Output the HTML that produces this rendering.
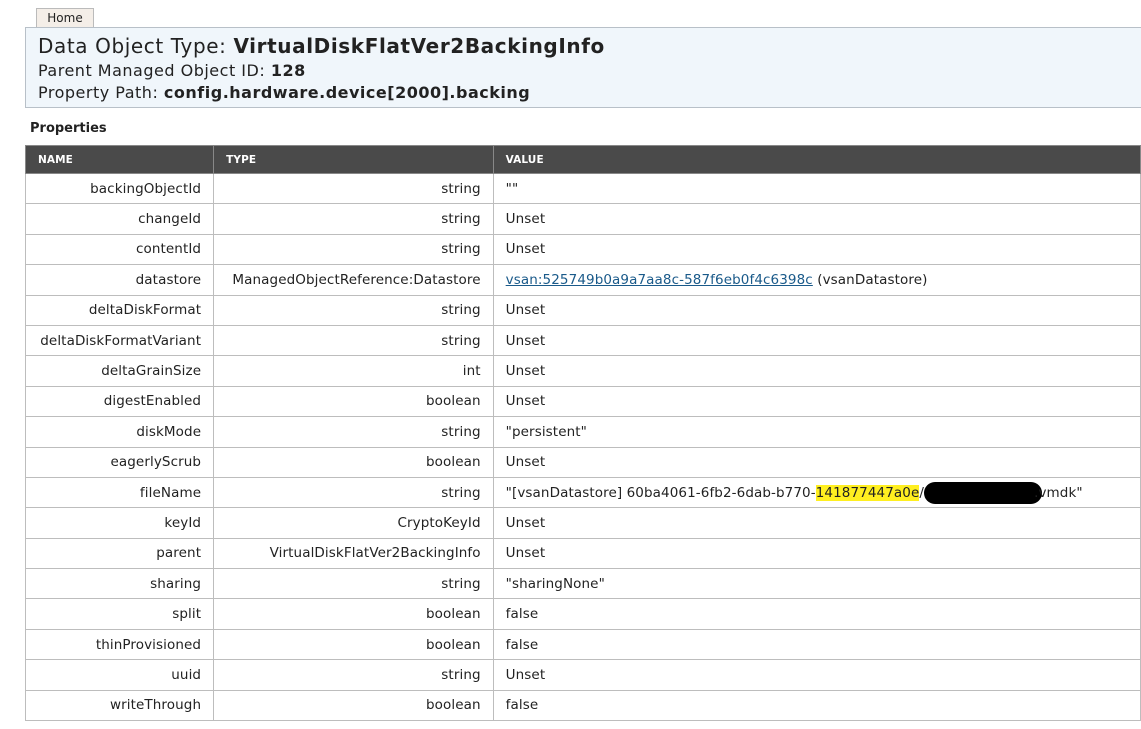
<!DOCTYPE html>
<html><head><meta charset="utf-8"><style>
body{margin:0;background:#fff;font-family:"DejaVu Sans","Liberation Sans",sans-serif;color:#222;width:1141px;height:729px;overflow:hidden;position:relative}
.tab{position:absolute;left:36px;top:8px;width:58px;height:19px;border:1px solid #bbb;border-bottom:none;background:#f4eee8;font-size:12px;line-height:19px;text-align:center;box-sizing:border-box}
.hdr{position:absolute;left:25px;top:27px;width:1130px;height:81px;background:#f0f6fb;border:1px solid #b8c0c8;box-sizing:border-box}
.t1{position:absolute;left:12px;top:6px;font-size:20px;white-space:nowrap;letter-spacing:0.6px}
.t2{position:absolute;left:12px;font-size:16px;white-space:nowrap;letter-spacing:0.5px}
.props{position:absolute;left:30px;top:121px;font-size:13px;font-weight:bold;letter-spacing:0}
table{position:absolute;left:25px;top:145px;border-collapse:collapse;font-size:13.5px;letter-spacing:0.1px}
th{background:#4a4a4a;color:#fff;font-size:10.5px;text-align:left;height:27px;padding:0 12px;border:1px solid #888;font-weight:bold}
td{height:29.4px;border:1px solid #bdbdbd;padding:0 12px;white-space:nowrap}
td.n,td.t{text-align:right}
a{color:#1a5a8a}
.hl{background:#ffef20}
.blk{display:inline-block;width:118px;height:22px;background:#000;border-radius:11px;vertical-align:middle;margin:0 -8px 0 0}
</style></head><body>
<div class="tab">Home</div>
<div class="hdr">
<div class="t1">Data Object Type: <b>VirtualDiskFlatVer2BackingInfo</b></div>
<div class="t2" style="top:33px">Parent Managed Object ID: <b>128</b></div>
<div class="t2" style="top:55px">Property Path: <b>config.hardware.device[2000].backing</b></div>
</div>
<div class="props">Properties</div>
<table>
<tr><th style="width:164px">NAME</th><th style="width:257px">TYPE</th><th style="width:640px">VALUE</th></tr>
<tr><td class="n">backingObjectId</td><td class="t">string</td><td>""</td></tr>
<tr><td class="n">changeId</td><td class="t">string</td><td>Unset</td></tr>
<tr><td class="n">contentId</td><td class="t">string</td><td>Unset</td></tr>
<tr><td class="n">datastore</td><td class="t">ManagedObjectReference:Datastore</td><td><a href="#">vsan:525749b0a9a7aa8c-587f6eb0f4c6398c</a> (vsanDatastore)</td></tr>
<tr><td class="n">deltaDiskFormat</td><td class="t">string</td><td>Unset</td></tr>
<tr><td class="n">deltaDiskFormatVariant</td><td class="t">string</td><td>Unset</td></tr>
<tr><td class="n">deltaGrainSize</td><td class="t">int</td><td>Unset</td></tr>
<tr><td class="n">digestEnabled</td><td class="t">boolean</td><td>Unset</td></tr>
<tr><td class="n">diskMode</td><td class="t">string</td><td>"persistent"</td></tr>
<tr><td class="n">eagerlyScrub</td><td class="t">boolean</td><td>Unset</td></tr>
<tr><td class="n">fileName</td><td class="t">string</td><td>"[vsanDatastore] 60ba4061-6fb2-6dab-b770-<span class="hl">141877447a0e</span>/<span class="blk"></span>.vmdk"</td></tr>
<tr><td class="n">keyId</td><td class="t">CryptoKeyId</td><td>Unset</td></tr>
<tr><td class="n">parent</td><td class="t">VirtualDiskFlatVer2BackingInfo</td><td>Unset</td></tr>
<tr><td class="n">sharing</td><td class="t">string</td><td>"sharingNone"</td></tr>
<tr><td class="n">split</td><td class="t">boolean</td><td>false</td></tr>
<tr><td class="n">thinProvisioned</td><td class="t">boolean</td><td>false</td></tr>
<tr><td class="n">uuid</td><td class="t">string</td><td>Unset</td></tr>
<tr><td class="n">writeThrough</td><td class="t">boolean</td><td>false</td></tr>
</table>
</body></html>
